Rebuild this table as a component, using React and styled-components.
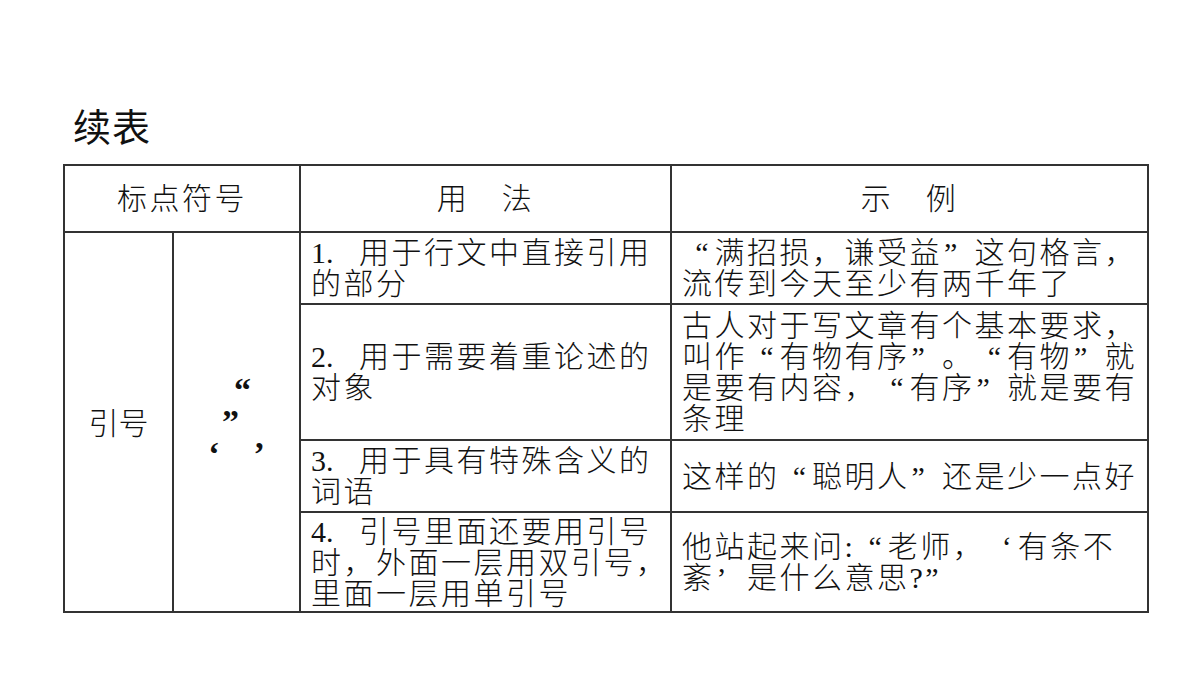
import React from 'react';
import styled, { createGlobalStyle } from 'styled-components';

const GlobalStyle = createGlobalStyle`
  body {
    margin: 0;
    background: #fff;
    color: #111;
    font-family: "Noto Sans CJK SC", sans-serif;
  }
`;

const Page = styled.div`
  width: 1200px;
  height: 675px;
  padding: 103px 0 0 63px;
  box-sizing: border-box;
  overflow: hidden;
`;

const Title = styled.h1`
  margin: 0 0 17px 10px;
  font: 400 38px/44px "Noto Sans CJK SC", sans-serif;
  letter-spacing: 1px;
  color: #111;
`;

const Table = styled.table`
  border-collapse: collapse;
  table-layout: fixed;
  width: 1084px;
  font-family: "Liberation Serif", "Noto Sans CJK SC", serif;
  font-size: 30px;
  font-weight: 300;
  line-height: 31px;
  letter-spacing: 2.5px;
  color: #111;
`;

const Row = styled.tr`
  height: ${p => p.$h}px;
`;

const HeadCell = styled.th`
  border: 2px solid #333;
  padding: 0;
  font-weight: 300;
  text-align: center;
  vertical-align: middle;
  white-space: nowrap;
`;

const Cell = styled.td`
  border: 2px solid #333;
  padding: ${p => (p.$center ? '0' : '0 0 0 10px')};
  text-align: ${p => (p.$center ? 'center' : 'left')};
  vertical-align: middle;
  white-space: nowrap;
  overflow: hidden;
`;

const Num = styled.span`
  display: inline-block;
  width: 48px;
  letter-spacing: 0;
`;

const Q = styled.span`
  display: inline-block;
  width: 32.5px;
  letter-spacing: 0;
  font-weight: 400;
  text-align: ${p => (p.$close ? 'left' : 'right')};
  padding: ${p => (p.$close ? '0 0 0 2px' : '0 6px 0 0')};
  box-sizing: border-box;
`;

const Marks = styled.div`
  font-family: "Liberation Serif", serif;
  font-size: 34px;
  font-weight: 700;
  line-height: 32px;
  letter-spacing: 0;
  text-align: center;
`;

const MarkLine = styled.div`
  padding-left: ${p => (p.$shift > 0 ? p.$shift : 0)}px;
  padding-right: ${p => (p.$shift < 0 ? -p.$shift : 0)}px;
`;

const Gap = styled.span`
  display: inline-block;
  width: 34px;
`;

const Label = styled.span`
  letter-spacing: 0;
  font-family: "Noto Sans CJK SC", sans-serif;
`;

export default function App() {
  return (
    <>
      <GlobalStyle />
      <Page>
        <Title>续表</Title>
        <Table>
          <colgroup>
            <col style={{ width: 109 }} />
            <col style={{ width: 127 }} />
            <col style={{ width: 371 }} />
            <col style={{ width: 477 }} />
          </colgroup>
          <thead>
            <Row $h={67}>
              <HeadCell colSpan={2}>标点符号</HeadCell>
              <HeadCell>用　法</HeadCell>
              <HeadCell>示　例</HeadCell>
            </Row>
          </thead>
          <tbody>
            <Row $h={72}>
              <Cell rowSpan={4} $center>
                <Label>引号</Label>
              </Cell>
              <Cell rowSpan={4} $center>
                <Marks>
                  <MarkLine $shift={12}>“</MarkLine>
                  <MarkLine $shift={-12}>”</MarkLine>
                  <MarkLine>‘<Gap />’</MarkLine>
                </Marks>
              </Cell>
              <Cell>
                <Num>1.</Num>用于行文中直接引用<br />的部分
              </Cell>
              <Cell>
                <Q>“</Q>满招损，谦受益<Q $close>”</Q>这句格言，<br />
                流传到今天至少有两千年了
              </Cell>
            </Row>
            <Row $h={136}>
              <Cell>
                <Num>2.</Num>用于需要着重论述的<br />对象
              </Cell>
              <Cell>
                古人对于写文章有个基本要求，<br />
                叫作<Q>“</Q>有物有序<Q $close>”</Q>。<Q>“</Q>有物<Q $close>”</Q>就<br />
                是要有内容，<Q>“</Q>有序<Q $close>”</Q>就是要有<br />
                条理
              </Cell>
            </Row>
            <Row $h={72}>
              <Cell>
                <Num>3.</Num>用于具有特殊含义的<br />词语
              </Cell>
              <Cell>
                这样的<Q>“</Q>聪明人<Q $close>”</Q>还是少一点好
              </Cell>
            </Row>
            <Row $h={100}>
              <Cell>
                <Num>4.</Num>引号里面还要用引号<br />
                时，外面一层用双引号，<br />
                里面一层用单引号
              </Cell>
              <Cell>
                他站起来问:<Q>“</Q>老师，<Q>‘</Q>有条不<br />
                紊<Q $close>’</Q>是什么意思?”
              </Cell>
            </Row>
          </tbody>
        </Table>
      </Page>
    </>
  );
}
